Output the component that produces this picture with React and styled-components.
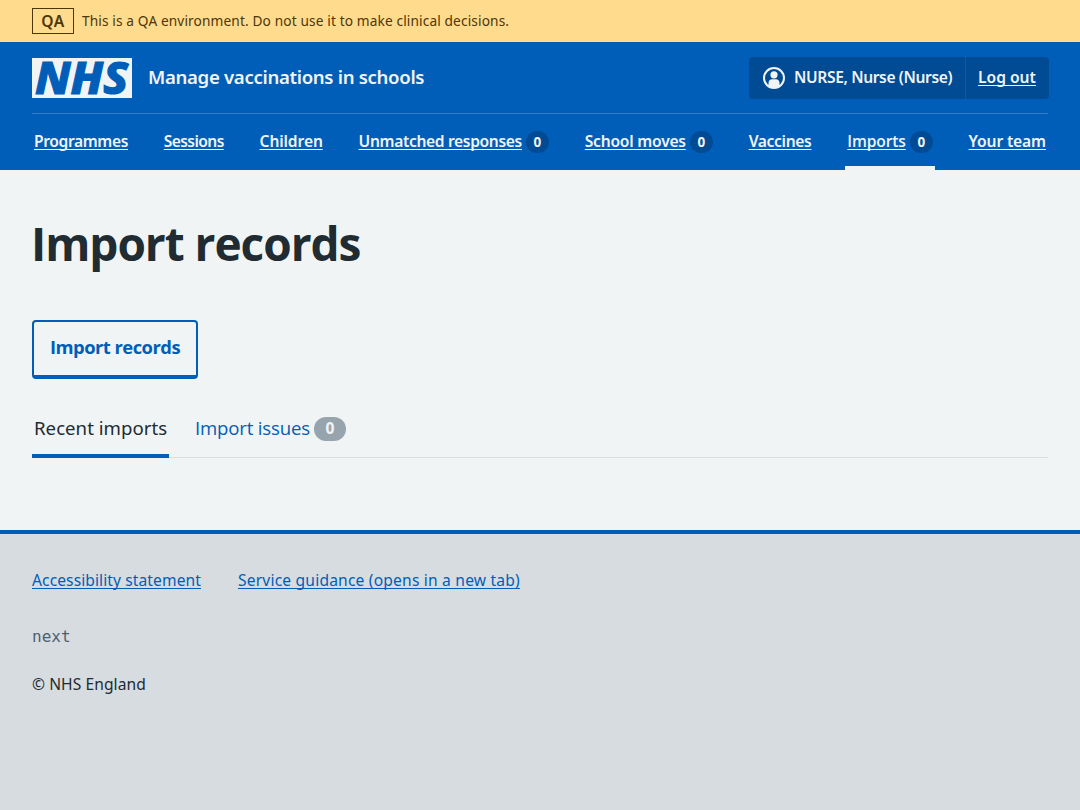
import React from 'react';
import styled, { createGlobalStyle, css } from 'styled-components';

const blue = '#005eb8';
const darkBlue = '#004b93';
const pale = '#f0f4f5';
const ink = '#212b32';
const grey = '#d7dce0';
const sans = '"Noto Sans", "Open Sans", sans-serif';
const plainSans = '"Open Sans", "Noto Sans", sans-serif';

const GlobalStyle = createGlobalStyle`
  * { box-sizing: border-box; }
  html { background: ${grey}; }
  body { margin: 0; background: ${grey}; color: ${ink}; font-family: ${sans}; font-size: 15.6px; }
  a { color: inherit; }
`;

const tracked = css`letter-spacing: ${p => p.$track || 0}px;`;

const Banner = styled.div`
  height: 42px;
  padding: 0 32px;
  display: flex;
  align-items: center;
  gap: 8px;
  background: #ffdb8d;
  color: #4d3708;
`;
const BannerTag = styled.strong`
  width: 42px;
  height: 26px;
  border: 1px solid currentColor;
  display: flex;
  align-items: center;
  justify-content: center;
  font-weight: 600;
  font-size: 15.6px;
  line-height: 24px;
  letter-spacing: 0.6px;
`;
const BannerText = styled.span`
  font-size: 13.7px;
  line-height: 24px;
  white-space: nowrap;
  ${tracked}
`;

const Header = styled.header`
  height: 128px;
  padding: 0 32px;
  background: ${blue};
  color: ${pale};
  font-weight: 600;
`;
const HeaderTop = styled.div`
  height: 72px;
  display: flex;
  align-items: center;
  border-bottom: 1px solid #337ec6;
`;
const Logo = styled.svg`
  display: block;
  overflow: visible;
  width: 100px;
  height: 40px;
  margin-right: 16px;
`;
const ServiceName = styled.span`
  padding-bottom: 2px;
  font-size: 18.6px;
  line-height: 28px;
  flex: 1;
  ${tracked}
`;
const Account = styled.div`
  width: 300px;
  height: 42px;
  margin-right: -1px;
  display: flex;
  border-radius: 4px;
  background: ${darkBlue};
`;
const AccountItem = styled.div`
  display: flex;
  align-items: center;
  line-height: 24px;
  white-space: nowrap;
  padding-left: ${p => p.$pad}px;
  width: ${p => p.$width}px;
  border-right: ${p => (p.$divided ? `1px solid ${blue}` : 'none')};
`;
const UserName = styled.span`
  padding-bottom: 1px;
  ${tracked}
`;
const UserIcon = styled.svg`
  width: 24px;
  height: 24px;
  margin-right: 8px;
`;
const Link = styled.a`
  margin-bottom: ${p => p.$lift || 0}px;
  text-decoration: underline;
  text-decoration-thickness: 1px;
  text-underline-offset: 2px;
  text-decoration-skip-ink: none;
  white-space: nowrap;
  ${tracked}
`;
const Nav = styled.nav`
  height: 56px;
  display: flex;
  justify-content: space-between;
`;
const NavItem = styled.div`
  height: 56px;
  padding: 4px 2px 0;
  display: flex;
  align-items: center;
  font-family: ${p => (p.$plain ? plainSans : sans)};
  border-bottom: 4px solid ${p => (p.$current ? pale : 'transparent')};
`;
const NavCount = styled.span`
  width: 23px;
  height: 22px;
  margin-left: 4px;
  border-radius: 12px;
  background: ${darkBlue};
  font: 700 13.5px/22px ${sans};
  text-align: center;
`;

const Main = styled.main`
  height: 360px;
  padding: 45px 32px 0;
  background: ${pale};
`;
const Title = styled.h1`
  margin: 0 0 49px -1px;
  font: 700 46px/56px ${plainSans};
  ${tracked}
`;
const Button = styled.button`
  display: block;
  width: 166px;
  height: 59px;
  margin: 0;
  padding: 0 0 4px;
  border: 2px solid ${blue};
  border-bottom-width: 4px;
  border-radius: 4px;
  background: transparent;
  color: ${blue};
  font: 700 18.4px/28px ${plainSans};
  ${tracked}
`;
const Tabs = styled.div`
  margin-top: 20px;
  height: 59px;
  display: flex;
  gap: 24px;
  box-shadow: inset 0 -1px #d8dde0;
`;
const Tab = styled.div`
  display: flex;
  align-items: center;
  padding: 4px 2px 0;
  font-family: ${p => (p.$plain ? plainSans : sans)};
  font-size: 18.6px;
  line-height: 28px;
  color: ${p => (p.$current ? ink : blue)};
  border-bottom: 4px solid ${p => (p.$current ? blue : 'transparent')};
  width: ${p => p.$width};
  white-space: nowrap;
  ${tracked}
`;
const TabLabel = styled.span`
  padding-bottom: 2px;
`;
const TabCount = styled.span`
  width: 32px;
  height: 24px;
  margin-left: 4px;
  border-radius: 12px;
  background: #98a4ad;
  color: ${pale};
  font: 700 15.6px/23px ${sans};
  letter-spacing: 0;
  text-align: center;
`;

const Footer = styled.footer`
  border-top: 4px solid ${blue};
  padding: 34px 32px 0;
  min-height: 280px;
  line-height: 24px;
`;
const FooterLinks = styled.div`
  display: flex;
  gap: 37px;
  color: ${blue};
`;
const Version = styled.div`
  margin-top: 33px;
  font: 16px/24px "DejaVu Sans Mono", monospace;
  color: #4c6272;
`;
const Copyright = styled.div`
  margin-top: 23px;
  ${tracked}
`;

const navItems = [
  { label: 'Programmes', track: -0.38 },
  { label: 'Sessions', track: -0.6 },
  { label: 'Children', track: -0.1 },
  { label: 'Unmatched responses', track: -0.34, count: 0 },
  { label: 'School moves', track: -0.22, count: 0 },
  { label: 'Vaccines', track: -0.33 },
  { label: 'Imports', track: -0.12, count: 0, current: true, plain: true },
  { label: 'Your team', track: -0.14 },
];

export default function App() {
  return (
    <>
      <GlobalStyle />
      <Banner>
        <BannerTag>QA</BannerTag>
        <BannerText $track={0.125}>This is a QA environment. Do not use it to make clinical decisions.</BannerText>
      </Banner>
      <Header>
        <HeaderTop>
          <Logo viewBox="0 0 100 40" role="img" aria-label="NHS">
            <path fill={pale} d="M0 0h100v40H0z" />
            <text
              x="3"
              y="36"
              textLength="93"
              lengthAdjust="spacingAndGlyphs"
              fill={blue}
              stroke={blue}
              strokeWidth="1.2"
              fontFamily="Noto Sans, sans-serif"
              fontSize="45"
              fontWeight="800"
              fontStyle="italic"
            >
              NHS
            </text>
          </Logo>
          <ServiceName $track={-0.32}>Manage vaccinations in schools</ServiceName>
          <Account>
            <AccountItem $pad={13} $width={217} $divided>
              <UserIcon viewBox="0 0 24 24">
                <circle cx="12" cy="12" r="10" fill="none" stroke={pale} strokeWidth="2" />
                <circle cx="12" cy="8.8" r="3.6" fill={pale} />
                <path fill={pale} d="M6.5 20.5V17c0-2.2 1.5-3.7 3.5-3.7h4c2 0 3.5 1.5 3.5 3.7v3.5C14 22.500 10 22.500 6.500 20.500z" />
              </UserIcon>
              <UserName $track={-0.37}>NURSE, Nurse (Nurse)</UserName>
            </AccountItem>
            <AccountItem $pad={12} $width={83}>
              <Link href="#" $lift={1} $track={0.01}>Log out</Link>
            </AccountItem>
          </Account>
        </HeaderTop>
        <Nav>
          {navItems.map(item => (
            <NavItem key={item.label} $current={item.current} $plain={item.plain}>
              <Link href="#" $lift={2} $track={item.track}>{item.label}</Link>
              {item.count !== undefined && <NavCount>{item.count}</NavCount>}
            </NavItem>
          ))}
        </Nav>
      </Header>
      <Main>
        <Title $track={-1.03}>Import records</Title>
        <Button $track={-0.53}>Import records</Button>
        <Tabs>
          <Tab $current $width="137px" $track={0.04}><TabLabel>Recent imports</TabLabel></Tab>
          <Tab $plain $track={-0.17}><TabLabel>Import issues</TabLabel><TabCount>0</TabCount></Tab>
        </Tabs>
      </Main>
      <Footer>
        <FooterLinks>
          <Link href="#" $track={0.09}>Accessibility statement</Link>
          <Link href="#" $track={0.19}>Service guidance (opens in a new tab)</Link>
        </FooterLinks>
        <Version>next</Version>
        <Copyright $track={0.07}>© NHS England</Copyright>
      </Footer>
    </>
  );
}
